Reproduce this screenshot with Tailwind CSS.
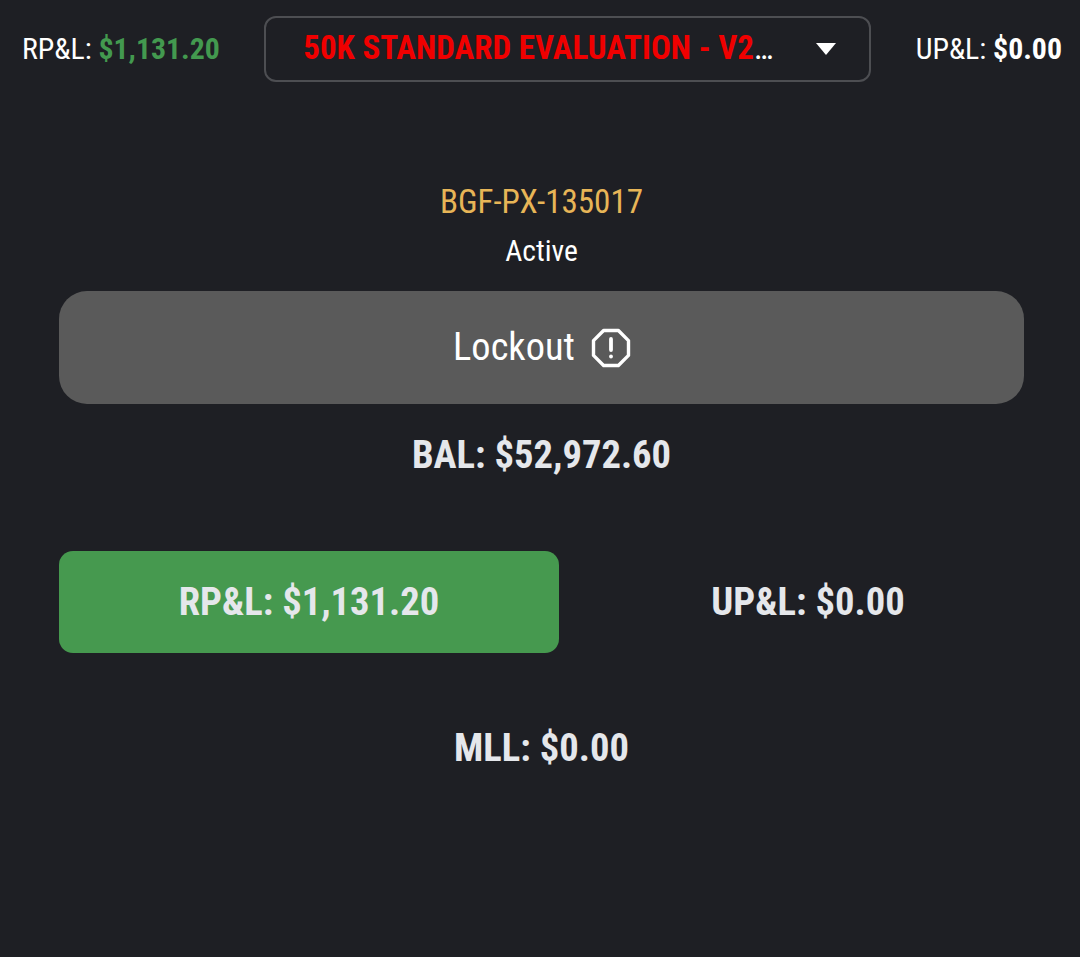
<!doctype html>
<html><head><meta charset="utf-8"><script src="https://cdn.jsdelivr.net/npm/@tailwindcss/browser@4"></script></head>
<body class="bg-[#1e1f24]">
<div class="w-[1080px] h-[957px] bg-[#1e1f24] text-white font-['Roboto',sans-serif] [font-stretch:75%] overflow-hidden">
  <header class="h-[98px] flex items-start pt-[16px] pl-[22px] pr-[18px] justify-between">
    <div class="h-[66px] flex items-center text-[29.8px] whitespace-nowrap">RP&amp;L:&nbsp;<span class="font-bold text-[#43994f]">$1,131.20</span></div>
    <div class="w-[607px] h-[66px] border-2 border-[#4d4e52] rounded-[12px] flex items-center pl-[37px] pr-[33px]">
      <div class="w-[473px] truncate text-[33px] relative top-[-1px]"><span class="text-[#f00000] font-bold">50K STANDARD EVALUATION - V2 ACCOUNT</span></div>
      <svg class="ml-auto w-[20px] h-[12px]" viewBox="0 0 20 12"><path d="M0 0h20L10 12z" fill="#fff"/></svg>
    </div>
    <div class="h-[66px] flex items-center text-[29.8px] whitespace-nowrap">UP&amp;L:&nbsp;<span class="font-bold">$0.00</span></div>
  </header>
  <main class="px-[59px] pr-[56px] flex flex-col items-center">
    <div class="mt-[84px] text-[33.1px] leading-[40px] text-[#e7b557]">BGF-PX-135017</div>
    <div class="mt-[9px] text-[29.6px] leading-[40px]">Active</div>
    <button class="mt-[20px] w-full h-[113px] rounded-[28px] bg-[#5a5a5a] flex items-center justify-center gap-[17px] text-[38.4px]">
      <span class="relative left-[1px] top-[-1px]">Lockout</span>
      <svg class="w-[40px] h-[40px]" viewBox="0 0 40 40" fill="none" stroke="#fff" stroke-width="3.4" stroke-linejoin="round" stroke-linecap="round"><path d="M12.6 2.5h14.8l10.1 10.1v14.8L27.4 37.5H12.6L2.5 27.4V12.6z"/><path d="M20 11v11" stroke-width="3.8"/><circle cx="20" cy="28.5" r="1.9" fill="#fff" stroke="none"/></svg>
    </button>
    <div class="mt-[26px] text-[38.6px] leading-[50px] font-bold text-[#e5e7eb]">BAL: $52,972.60</div>
    <div class="mt-[71px] w-full flex h-[102px] text-[38.6px] font-bold text-[#e5e7eb]">
      <div class="w-[500px] rounded-[14px] bg-[#46994f] flex items-center justify-center">RP&amp;L: $1,131.20</div>
      <div class="flex-1 ml-[33px] flex items-center justify-center">UP&amp;L: $0.00</div>
    </div>
    <div class="mt-[70px] text-[38.6px] leading-[50px] font-bold text-[#e5e7eb]">MLL: $0.00</div>
  </main>
</div>
</body></html>
